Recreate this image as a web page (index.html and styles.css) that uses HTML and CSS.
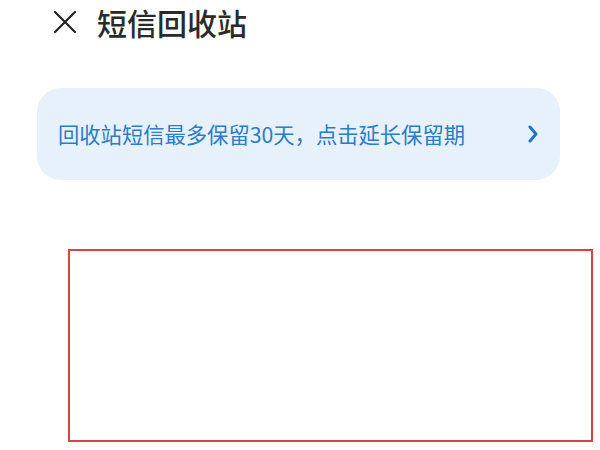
FILE: index.html
```html
<!DOCTYPE html>
<html lang="zh">
<head>
<meta charset="utf-8">
<link rel="stylesheet" href="styles.css">
</head>
<body>
<div class="page">
  <header class="header">
    <svg class="close" viewBox="0 0 24 24" width="24" height="24"><path d="M2 2 L22 22 M22 2 L2 22" stroke="#222" stroke-width="2.2" stroke-linecap="round" fill="none"/></svg>
    <h1 class="title">短信回收站</h1>
  </header>
  <div class="banner">
    <span class="banner-text">回收站短信最多保留30天，点击延长保留期</span>
    <svg class="chev" viewBox="0 0 10 18" width="10" height="18"><path d="M2 2 L8 9 L2 16" stroke="#1f74cf" stroke-width="3" stroke-linecap="round" stroke-linejoin="round" fill="none"/></svg>
  </div>
  <div class="frame"></div>
</div>
</body>
</html>
```

FILE: styles.css
```css
html, body {
  margin: 0;
  padding: 0;
  background: #ffffff;
}
.page {
  width: 600px;
  height: 450px;
  overflow: hidden;
  font-family: "Noto Sans CJK SC", "Noto Sans", sans-serif;
}
.header {
  display: flex;
  align-items: center;
  height: 44px;
  padding-left: 53px;
  padding-top: 0;
}
.close {
  flex: none;
  margin-top: 0;
}
.title {
  margin: 0 0 0 20px;
  font-size: 30px;
  font-weight: 500;
  color: #2a2a2a;
  line-height: 44px;
}
.banner {
  margin: 44px 0 0 37px;
  width: 523px;
  height: 92px;
  box-sizing: border-box;
  border-radius: 24px;
  background: #e7f1fc;
  display: flex;
  align-items: center;
  justify-content: space-between;
  padding: 0 22px 0 21px;
}
.banner-text {
  font-size: 21.3px;
  color: #2c7cc6;
  line-height: 1;
}
.chev {
  flex: none;
}
.frame {
  margin: 69px 0 0 68px;
  width: 525px;
  height: 193px;
  box-sizing: border-box;
  border: 2px solid #d4463f;
}
```
